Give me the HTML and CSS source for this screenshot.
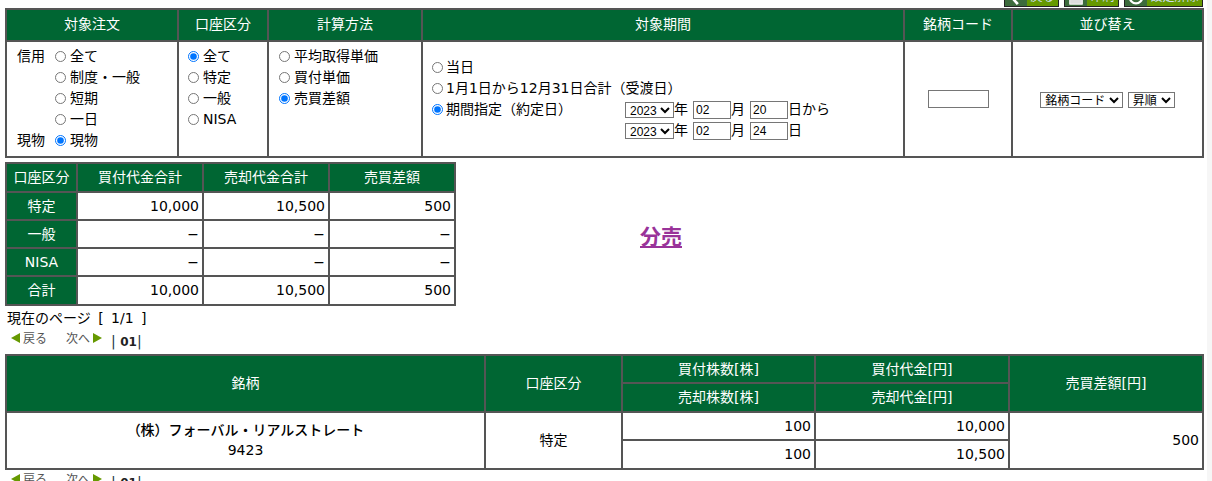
FILE: index.html
```html
<!DOCTYPE html>
<html lang="ja">
<head>
<meta charset="utf-8">
<title>売買差額</title>
<link rel="stylesheet" href="styles.css">
</head>
<body>
<div class="topbar">
  <a class="tbtn t1"><svg class="ti" viewBox="0 0 20 20"><path d="M12 2 5 10l7 8" fill="none" stroke="#fff" stroke-width="3"/></svg><span>戻る</span></a>
  <a class="tbtn t2"><svg class="ti" viewBox="0 0 20 20"><rect x="3" y="2" width="14" height="16" fill="#ddd" stroke="#fff"/></svg><span>印刷</span></a>
  <a class="tbtn t3"><svg class="ti" viewBox="0 0 20 20"><circle cx="10" cy="10" r="7" fill="none" stroke="#fff" stroke-width="2.5"/></svg><span>設定解除</span></a>
</div>

<table class="grid filter">
  <colgroup><col class="f1"><col class="f2"><col class="f3"><col class="f4"><col class="f5"><col class="f6"></colgroup>
  <tr class="fhead"><th>対象注文</th><th>口座区分</th><th>計算方法</th><th>対象期間</th><th>銘柄コード</th><th>並び替え</th></tr>
  <tr class="fbody">
    <td class="top">
      <div class="orders">
        <span>信用</span><label><input type="radio" name="o">全て</label>
        <span></span><label><input type="radio" name="o">制度・一般</label>
        <span></span><label><input type="radio" name="o">短期</label>
        <span></span><label><input type="radio" name="o">一日</label>
        <span>現物</span><label><input type="radio" name="o" checked>現物</label>
      </div>
    </td>
    <td class="top">
      <div class="stack">
        <label><input type="radio" name="a" checked>全て</label>
        <label><input type="radio" name="a">特定</label>
        <label><input type="radio" name="a">一般</label>
        <label><input type="radio" name="a">NISA</label>
      </div>
    </td>
    <td class="top">
      <div class="stack calc">
        <label><input type="radio" name="c">平均取得単価</label>
        <label><input type="radio" name="c">買付単価</label>
        <label><input type="radio" name="c" checked>売買差額</label>
      </div>
    </td>
    <td>
      <div class="period">
        <label class="pspan"><input type="radio" name="p">当日</label>
        <label class="pspan"><input type="radio" name="p">1月1日から12月31日合計（受渡日）</label>
        <label class="pick"><input type="radio" name="p" checked>期間指定（約定日）</label>
        <div class="dates">
          <div class="dline"><select class="sel"><option>2023</option></select>年<input class="num" value="02">月<input class="num" value="20">日から</div>
          <div class="dline"><select class="sel"><option>2023</option></select>年<input class="num" value="02">月<input class="num" value="24">日</div>
        </div>
      </div>
    </td>
    <td class="mid"><input class="code"></td>
    <td class="mid"><select class="sel"><option>銘柄コード</option></select> <select class="sel"><option>昇順</option></select></td>
  </tr>
</table>

<div class="summary">
  <table class="grid sum">
    <colgroup><col class="s1"><col class="s2"><col class="s2"><col class="s2"></colgroup>
    <tr class="shead"><th>口座区分</th><th>買付代金合計</th><th>売却代金合計</th><th>売買差額</th></tr>
    <tr class="r1"><th>特定</th><td class="n">10,000</td><td class="n">10,500</td><td class="n">500</td></tr>
    <tr class="r1"><th>一般</th><td class="n">−</td><td class="n">−</td><td class="n">−</td></tr>
    <tr class="r1"><th>NISA</th><td class="n">−</td><td class="n">−</td><td class="n">−</td></tr>
    <tr class="r2"><th>合計</th><td class="n">10,000</td><td class="n">10,500</td><td class="n">500</td></tr>
  </table>
  <a class="bunbai" href="#">分売</a>
</div>

<div class="pageinfo">現在のページ [ 1/1 ]</div>
<div class="pager">
  <span class="tri-l"></span><span class="plink back">戻る</span><span class="plink next">次へ</span><span class="tri-r"></span><span class="pnum">| <b>01</b>|</span>
</div>

<table class="grid detail">
  <colgroup><col class="d1"><col class="d2"><col class="d3"><col class="d3b"><col class="d4"></colgroup>
  <tr class="dh1"><th rowspan="2">銘柄</th><th rowspan="2">口座区分</th><th>買付株数[株]</th><th>買付代金[円]</th><th rowspan="2">売買差額[円]</th></tr>
  <tr class="dh2"><th>売却株数[株]</th><th>売却代金[円]</th></tr>
  <tr class="dh1"><td rowspan="2" class="name"><div class="nm">（株）フォーバル・リアルストレート</div><div>9423</div></td><td rowspan="2" class="c">特定</td><td class="n">100</td><td class="n">10,000</td><td rowspan="2" class="n">500</td></tr>
  <tr class="dh2"><td class="n">100</td><td class="n">10,500</td></tr>
</table>

<div class="pager second">
  <span class="tri-l"></span><span class="plink back">戻る</span><span class="plink next">次へ</span><span class="tri-r"></span><span class="pnum">| <b>01</b>|</span>
</div>
</body>
</html>
```

FILE: styles.css
```css
html, body { margin: 0; height: 481px; overflow: hidden; background: #fff; }
body {
  padding: 0 8px 0 5px;
  font: 14px/21px "DejaVu Sans", "Noto Sans CJK JP", sans-serif;
  color: #000;
  box-sizing: border-box;
}
body::after { content: ""; position: absolute; top: 0; right: 0; width: 5px; height: 481px; background: #f6f6f6; }
.topbar { height: 7px; margin-bottom: 1px; overflow: hidden; display: flex; justify-content: flex-end; align-items: flex-end; gap: 5px; padding-right: 1px; width: 1199px; box-sizing: border-box; }
.tbtn { flex: none; height: 20px; box-sizing: border-box; background: #669900; border: 1px solid #222; display: flex; color: #cde; font-size: 12px; line-height: 18px; }
.t1 { width: 55px; } .t2 { width: 55px; } .t3 { width: 79px; }
.ti { width: 22px; height: 18px; background: #3c6b3c; flex: none; }
.tbtn span { flex: 1; text-align: center; }

.grid { border-collapse: collapse; table-layout: fixed; border: 2px solid #555; }
.grid th, .grid td { border: 2px solid #555; padding: 0; }
.grid th { background: #006633; color: #fff; font-weight: normal; text-align: center; }

.filter { width: 1197px; }
.f1 { width: 172px; } .f2 { width: 90px; } .f3 { width: 154px; } .f4 { width: 482px; } .f5 { width: 108px; } .f6 { width: 191px; }
.fhead { height: 32px; }
.fhead th { padding-bottom: 2px; }
.fbody { height: 116px; }
.fbody td { vertical-align: middle; }
.fbody td.top { vertical-align: top; padding-top: 4px; }
.fbody td.mid { text-align: center; }
label { display: flex; align-items: center; white-space: nowrap; }
input[type=radio] { width: 11px; height: 11px; margin: 0 4px 0 0; flex: none; }
.orders { display: grid; grid-template-columns: 38px 1fr; padding-left: 10px; }
.stack { display: flex; flex-direction: column; padding-left: 9px; }
.calc { padding-left: 10px; }
.period { display: grid; grid-template-columns: 193px 1fr; padding-left: 9px; }
.period input[type=radio] { margin-right: 3px; }
.pspan { grid-column: 1 / -1; }
.pick { align-self: start; }
.dline { display: flex; align-items: center; height: 21px; }
.sel { font: 12px "Liberation Sans", "Noto Sans CJK JP", sans-serif; height: 16px; padding: 0; border: 1px solid #767676; border-radius: 0; background: #fff; vertical-align: middle; margin: 0; }
.num { width: 38px; height: 18px; box-sizing: border-box; padding: 0 2px; margin: 0 0 0 5px; border: 1px solid #767676; font: 12px "Liberation Sans", sans-serif; }
.code { width: 61px; height: 18px; box-sizing: border-box; border: 1px solid #767676; padding: 0; }

.summary { display: flex; align-items: center; margin-top: 4px; }
.sum { width: 449px; flex: none; }
.s1 { width: 71px; } .s2 { width: 126px; }
.shead { height: 29px; }
.r1 { height: 28px; } .r2 { height: 29px; }
.n { text-align: right; padding-right: 3px !important; }
.bunbai { margin-left: 184px; padding-top: 3px; font-size: 21px; font-weight: bold; color: #993399; font-family: "Noto Sans CJK JP", sans-serif; }

.pageinfo { height: 21px; padding-left: 2px; margin-top: 2px; word-spacing: 3px; }
.pager { display: flex; align-items: center; height: 21px; padding-left: 6px; font-size: 12px; color: #555; }
.tri-l { border: 5px solid transparent; border-left: 0; border-right: 9px solid #669900; margin-top: -3px; }
.tri-r { border: 5px solid transparent; border-right: 0; border-left: 9px solid #669900; margin-top: -3px; }
.back { margin-right: 19px; margin-left: 3px; }
.next { margin-right: 3px; }
.pnum { margin-left: 9px; margin-top: 5px; color: #234; font-size: 14px; }
.pnum b { color: #222; font-size: 12px; }

.detail { width: 1197px; margin-top: 4px; }
.d1 { width: 479px; } .d2 { width: 137px; } .d3 { width: 193px; } .d3b { width: 194px; } .d4 { width: 194px; }
.dh1 { height: 28px; }
.dh2 { height: 29px; }
.c, .name { text-align: center; }
.name { padding-bottom: 2px !important; }
.nm { font-family: "Noto Sans CJK JP", sans-serif; font-weight: 500; line-height: 22px; }
```
